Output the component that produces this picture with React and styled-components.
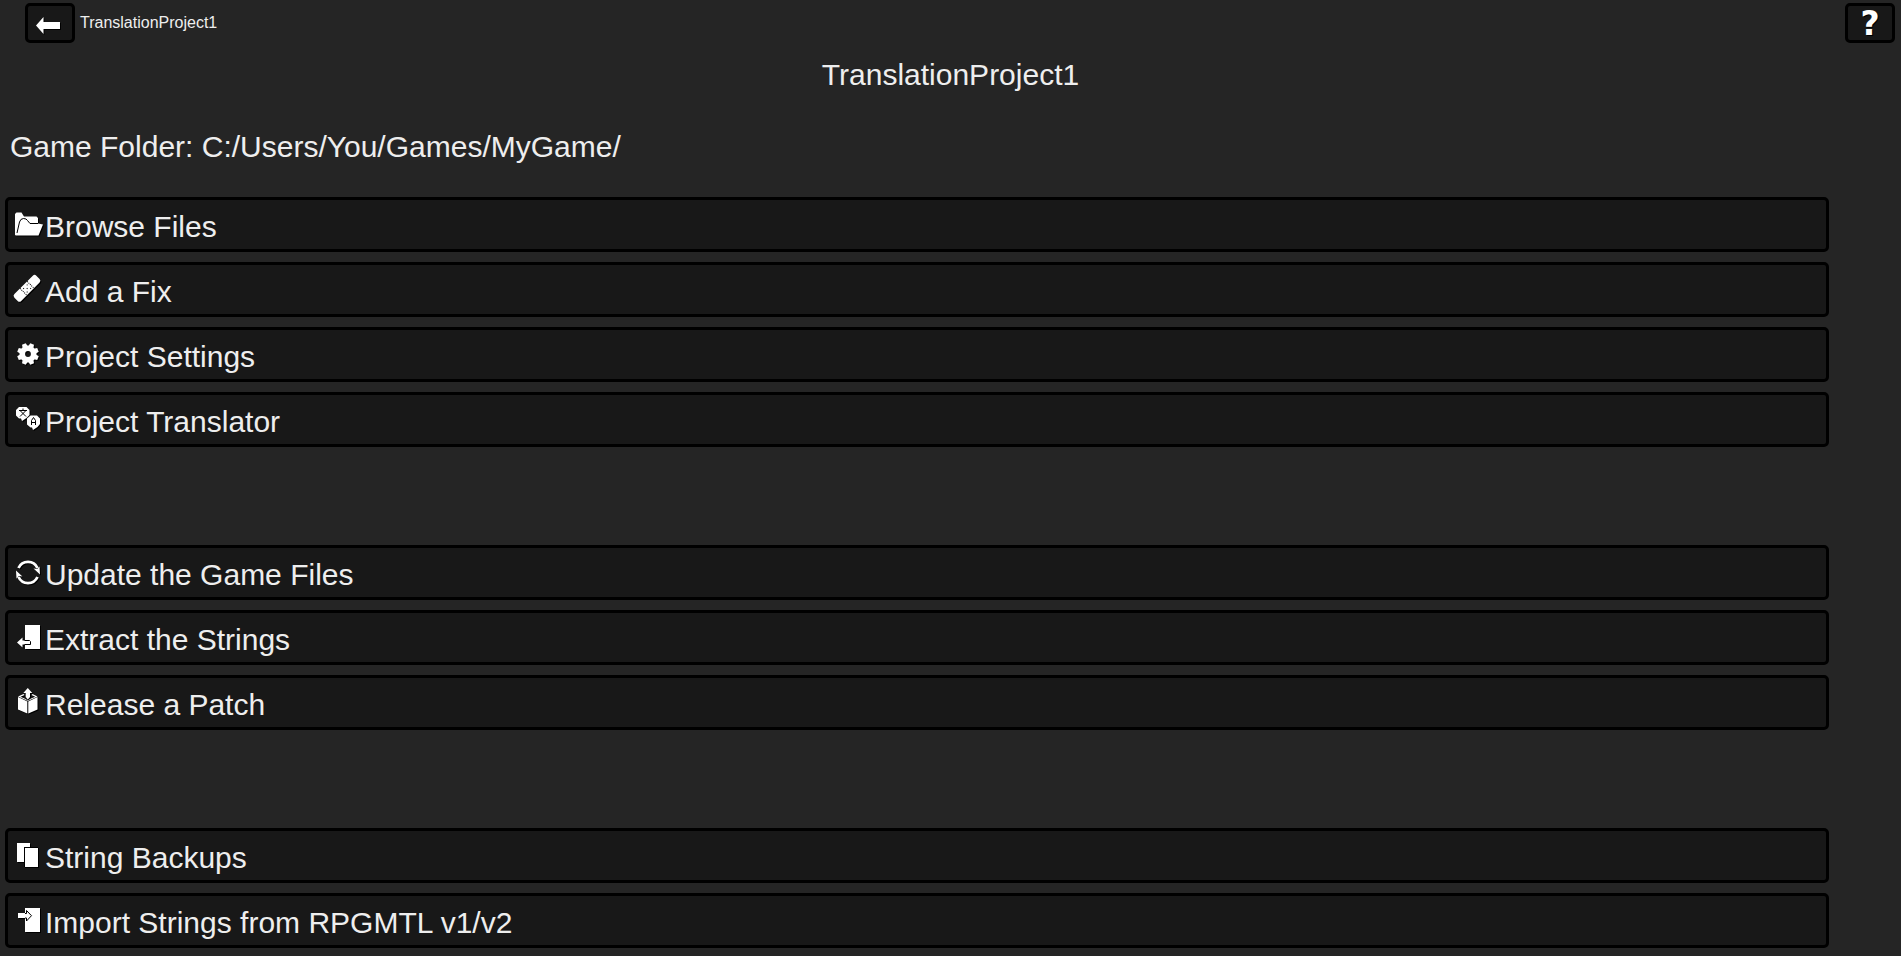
import React from "react";
import styled, { createGlobalStyle } from "styled-components";

const GlobalStyle = createGlobalStyle`
  *, *::before, *::after { box-sizing: border-box; }
  body {
    margin: 0;
    background: #252525;
    color: #eeeeee;
    font-family: Arial, "Liberation Sans", sans-serif;
    font-size: 16px;
  }
`;

const TopBar = styled.header`
  display: flex;
  align-items: flex-start;
  gap: 5px;
  padding: 3px 6px 0 25px;
`;

const BarTitle = styled.span`
  flex: 1;
  padding-top: 11px;
  line-height: 18px;
`;

const BaseButton = styled.button`
  display: flex;
  align-items: center;
  border: 3px solid #000000;
  border-radius: 5px;
  background: #181818;
  color: #eeeeee;
  font-family: inherit;
  cursor: pointer;

  &:hover { background: #303030; }
`;

const SquareButton = styled(BaseButton)`
  justify-content: center;
  width: 50px;
  height: 40px;
  padding: 0;
`;

const HelpMark = styled.span`
  padding-top: 2px;
  color: #ffffff;
  font-family: "DejaVu Sans", sans-serif;
  font-size: 33px;
  font-weight: bold;
  line-height: 32px;
  text-shadow: 1px 1px 0 #000000;
`;

const Title = styled.h1`
  margin: 15px 0 0;
  font-size: 30px;
  font-weight: normal;
  line-height: 34px;
  text-align: center;
`;

const Folder = styled.p`
  margin: 38px 10px 0;
  font-size: 30px;
  line-height: 34px;
`;

const Actions = styled.main`
  display: flex;
  flex-direction: column;
  gap: 98px;
  margin: 33px 72px 8px 5px;
`;

const Group = styled.section`
  display: flex;
  flex-direction: column;
  gap: 10px;
`;

const ActionButton = styled(BaseButton)`
  width: 100%;
  height: 55px;
  padding: 0 4px;
  gap: 1px;
  text-align: left;
`;

const Label = styled.span`
  padding-top: 4px;
  font-size: 30px;
  line-height: 34px;
`;

const IconSvg = styled.svg`
  flex: none;
  width: 32px;
  height: 33px;
  fill: #ffffff;
  filter: drop-shadow(1px 1px 0 #000000);
`;

const Cut = styled.g`
  fill: none;
  stroke: #000000;
  stroke-width: 1;
`;

const gearTeeth = [22.5, 67.5, 112.5, 157.5, 202.5, 247.5, 292.5, 337.5];

const icons = {
  back: <path d="M2 18.5 L9.5 10 V15 H26 V22 H9.5 V27 Z" />,
  folder: (
    <>
      <path d="M3 27 V6 L4.5 4.5 H9.5 L12 8.5 H24.5 L26 10 V15.5 L31 16.5 L26.5 27.5 H4 Z" />
      <Cut><path d="M5 25 L7.5 14 Q8.5 10.5 11.5 10.5 Q14.5 10.5 15.5 12.5 L18 15.5 H26" /></Cut>
    </>
  ),
  fix: (
    <>
      <rect x="-0.5" y="10.5" width="31" height="9.6" rx="2.5" transform="rotate(-45 15 15.3)" />
      <g transform="rotate(-45 15 15.3)">
        <Cut strokeDasharray="1 1"><path d="M10 10.5 V20 M20 10.5 V20" /></Cut>
        <g fill="#000000">
          <rect x="12" y="12.5" width="1" height="1" />
          <rect x="17" y="12.5" width="1" height="1" />
          <rect x="14.5" y="15" width="1" height="1" />
          <rect x="12" y="17.5" width="1" height="1" />
          <rect x="17" y="17.5" width="1" height="1" />
        </g>
      </g>
    </>
  ),
  gear: (
    <>
      <circle cx="16" cy="16" r="5.7" fill="none" stroke="#ffffff" strokeWidth="5.6" />
      {gearTeeth.map((angle) => (
        <path key={angle} d="M13.3 8.5 L14 5.2 H18 L18.7 8.5 Z" transform={`rotate(${angle} 16 16)`} />
      ))}
    </>
  ),
  translate: (
    <>
      <path d="M7 4 H14.5 L17.5 7 V12 L14.5 15 L10 18 L9 15.5 H7 L4 12.5 V7 Z" />
      <path d="M18.5 12.5 H25 L28 15.5 V21 L25.5 24 L21 27 L20 24.5 H18.5 L15 21.5 V15.5 Z" />
      <Cut><path d="M7 7.5 H15 M11 5.5 V7.5 M8.5 8 L14 13.5 M13.5 8 L8 13.5 M19.5 22 V17.5 L21.5 14.5 L23.5 17.5 V22 M19.5 19.5 H23.5" /></Cut>
    </>
  ),
  update: (
    <>
      <g fill="none" stroke="#ffffff" strokeWidth="2.8">
        <path d="M6.5 12 A10.5 10.5 0 0 1 25.5 12" />
        <path d="M25.5 21 A10.5 10.5 0 0 1 6.5 21" />
      </g>
      <path d="M21.5 12.5 L25 13 L27.5 10.5 L28 18.5 Z" />
      <path d="M10.5 20.5 L7 20 L4.5 22.5 L4 14.5 Z" />
    </>
  ),
  extract: (
    <>
      <rect x="13" y="4" width="15" height="24" />
      <path d="M5 21.5 L10.5 16.5 V19.5 H18.5 V23.5 H10.5 V26.5 Z" />
      <Cut><path d="M12.5 19.5 H17.5 L18.5 20.5 V23.5 H12.5" /></Cut>
    </>
  ),
  release: (
    <>
      <path d="M6 11 L15.3 15.5 V27.5 L6 23.5 Z M25.5 11 L16.3 15.5 V27.5 L25.5 23.5 Z" />
      <path d="M6 10.5 L11.5 8 L12.5 9 L8.5 10.8 L12.5 12.5 L15.8 14.5 L19 12.5 L23.2 10.8 L19.5 9 L20.5 8 L25.5 10.5 L15.8 15 Z" />
      <path d="M15.8 2 L20.3 7 H18 V11 L15.8 13.5 L13.7 11 V7 H11.3 Z" />
    </>
  ),
  backups: (
    <>
      <rect x="5" y="4" width="13" height="19" />
      <rect x="12" y="8" width="14" height="20" fill="#000000" />
      <rect x="13" y="9" width="13" height="19" />
    </>
  ),
  import: (
    <>
      <rect x="13" y="4" width="15" height="24" />
      <path d="M6 9 H14 V14 H6 Z" />
      <Cut><path d="M13 9.5 H14.5 V6.5 L19.5 11.7 L14.5 17 V14 H13" /></Cut>
    </>
  ),
};

function Icon({ name }) {
  return (
    <IconSvg viewBox="0 0 32 33" aria-hidden="true">
      {icons[name]}
    </IconSvg>
  );
}

const groups = [
  [
    ["folder", "Browse Files"],
    ["fix", "Add a Fix"],
    ["gear", "Project Settings"],
    ["translate", "Project Translator"],
  ],
  [
    ["update", "Update the Game Files"],
    ["extract", "Extract the Strings"],
    ["release", "Release a Patch"],
  ],
  [
    ["backups", "String Backups"],
    ["import", "Import Strings from RPGMTL v1/v2"],
  ],
];

export default function App() {
  return (
    <>
      <GlobalStyle />
      <TopBar>
        <SquareButton type="button" aria-label="Back">
          <Icon name="back" />
        </SquareButton>
        <BarTitle>TranslationProject1</BarTitle>
        <SquareButton type="button" aria-label="Help">
          <HelpMark>?</HelpMark>
        </SquareButton>
      </TopBar>
      <Title>TranslationProject1</Title>
      <Folder>Game Folder: C:/Users/You/Games/MyGame/</Folder>
      <Actions>
        {groups.map((items) => (
          <Group key={items[0][0]}>
            {items.map(([icon, label]) => (
              <ActionButton type="button" key={icon}>
                <Icon name={icon} />
                <Label>{label}</Label>
              </ActionButton>
            ))}
          </Group>
        ))}
      </Actions>
    </>
  );
}
